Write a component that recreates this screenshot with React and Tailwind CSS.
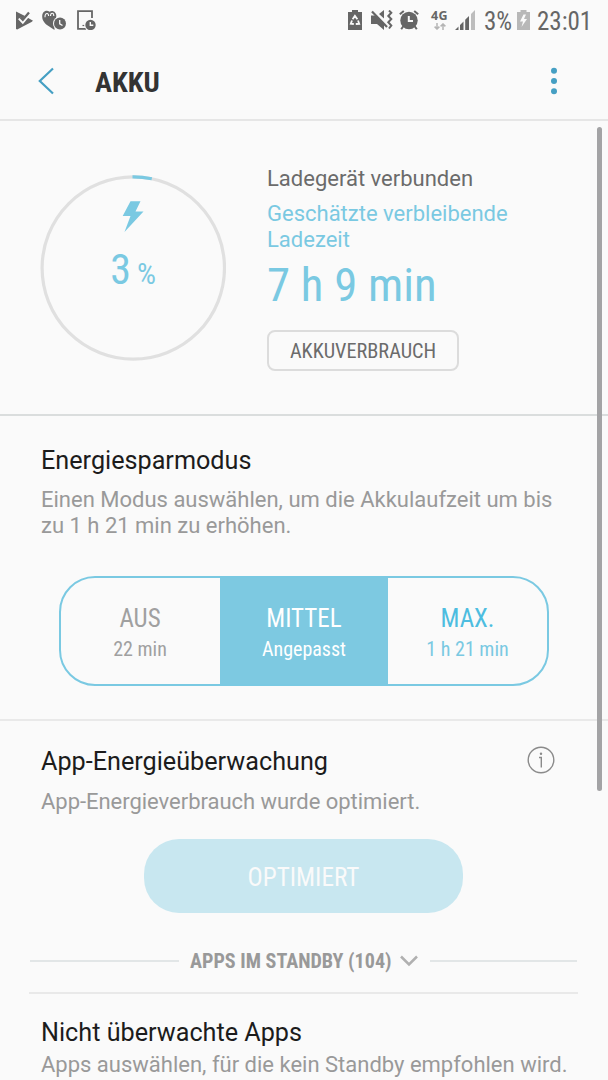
import { useState } from 'react'

const MODES = [
  { id: 'off', label: 'AUS',    info: '22 min' },
  { id: 'mid', label: 'MITTEL', info: 'Angepasst' },
  { id: 'max', label: 'MAX.',   info: '1 h 21 min' },
]

const condensed = 'font-stretch-condensed'

function StatusBar() {
  return (
    <div className="flex h-10 items-center pl-4 text-[#666]">
      {/* notifications */}
      <svg className="mt-0.5" width="18" height="20" viewBox="0 0 18 20" fill="currentColor">
        <path d="M0 .5 L9 5 L6.8 8 L4.8 6 L2.6 8 L6.8 12.3 L11.4 6.5 L17 9.8 L15.5 11 L1.2 18.6 L0 18 Z" />
        <path d="M2.8 7.6 L6.8 11.8 L13 4.500" fill="none" stroke="#fafafa" strokeWidth="1.800" />
        <path d="M4.300 6.300 L6.800 8.800 L13 1.600" fill="none" stroke="currentColor" strokeWidth="2.300" />
      </svg>
      <svg className="ml-2" width="25" height="20" viewBox="0 0 25 20" fill="currentColor">
        <path d="M7.5 1.8 C5 -.6 .3 1.2 .2 6 C0 11 3.5 14 6.5 16 L12.5 20 V14 L14 8 C15.500 3.500 11.500 -.6 7.500 1.800 Z" />
        <path d="M3 7.200 C3 4.500 4 3.500 5 3.500 C6.300 3.500 6.600 5 6.600 6 M8.500 6 C8.500 4.200 9.200 3.200 10.300 3.200 C11.500 3.200 11.800 4.500 11.800 6" fill="none" stroke="#fafafa" strokeWidth="1.100" />
        <circle cx="18" cy="13.500" r="7" fill="#fafafa" />
        <circle cx="18" cy="13.500" r="6" />
        <path d="M17.700 10 V13.800 L20.500 15.500" fill="none" stroke="#fafafa" strokeWidth="1.300" />
      </svg>
      <svg className="ml-2.5" width="20" height="20" viewBox="0 0 20 20" fill="currentColor">
        <path d="M15 8 V1.200 H1 V18.800 H9" fill="none" stroke="currentColor" strokeWidth="1.800" />
        <path d="M5.500 15.500 H7.500" stroke="currentColor" strokeWidth="1.200" />
        <circle cx="13.500" cy="15" r="6.200" fill="#fafafa" />
        <circle cx="13.500" cy="15" r="5.200" />
        <path d="M13.300 12 V15.200 H16.300" fill="none" stroke="#fafafa" strokeWidth="1.400" />
      </svg>

      {/* system state */}
      <svg className="ml-auto" width="14" height="20" viewBox="0 0 14 20" fill="currentColor">
        <path d="M4 0 H10 V2 H14 V20 H0 V2 H4 Z" />
        <path d="M4.600 9.300 L6.900 5.900 L9.400 9.300 M10 10.500 L11.200 13.800 L7.800 14 M5.800 14 L2.800 13.800 L4 10.500" fill="none" stroke="#fafafa" strokeWidth="1.800" />
      </svg>
      <svg className="ml-[9px]" width="22" height="20" viewBox="0 0 22 20" fill="currentColor">
        <path d="M0 5.500 H5 L13 13 V20 L6 14 H0 Z" />
        <path d="M8 4 L13 0 V8.500 Z" />
        <path d="M1 1.500 L16 17" stroke="currentColor" strokeWidth="2.200" />
        <path d="M18 .5 L20.300 2.800 L17.300 6 L20.300 9 L17.300 12.300 L20.300 15.500 L18 18.500" fill="none" stroke="currentColor" strokeWidth="2" />
      </svg>
      <svg className="ml-1.5" width="20" height="20" viewBox="0 0 20 20" fill="currentColor">
        <circle cx="10" cy="10.500" r="8.700" />
        <path d="M.8 4.200 L4.800 .9 M15.200 .9 L19.200 4.200 M4.500 16 L2.200 19.300 M15.500 16 L17.800 19.300" stroke="currentColor" strokeWidth="2" />
        <path d="M9.800 6 V11 H14" fill="none" stroke="#fafafa" strokeWidth="2" />
      </svg>
      <div className="ml-3 flex w-[17px] flex-col items-center">
        <span className="font-['Open_Sans',sans-serif] text-[12.500px] leading-[11px] font-bold tracking-[0.500px]">4G</span>
        <svg className="mt-[2px]" width="12" height="7" viewBox="0 0 12 7" fill="none" stroke="#b5b5b5" strokeWidth="1.500">
          <path d="M3 0 V6 M.6 3.600 L3 6 L5.400 3.600 M9 7 V1 M6.600 3.400 L9 1 L11.400 3.400" />
        </svg>
      </div>
      <svg className="ml-[7px]" width="20" height="20" viewBox="0 0 20 20" fill="currentColor">
        <path d="M0 20 L3.500 16.500 V20 Z M5 20 V15 L8.500 11.500 V20 Z M10.200 20 V9.800 L14 6 V20 Z" />
        <path d="M16 20 V4 L20 0 V20 Z" fill="#bdbdbd" />
      </svg>
      <span className={`ml-[9px] w-[27px] pt-[3px] text-[25px] leading-9 ${condensed}`}>3%</span>
      <svg className="ml-[6px]" width="13" height="20" viewBox="0 0 13 20">
        <path d="M3.500 0 H9.500 V2 H13 V20 H0 V2 H3.500 Z" fill="#b8b8b8" />
        <path d="M6.500 4.500 L3 11.500 H6 L4.500 17 L10 9 H7 L9 4.500 Z" fill="#fafafa" />
      </svg>
      <span className={`mr-4 ml-[7px] w-[55px] pt-[3px] text-[25px] leading-9 ${condensed}`}>23:01</span>
    </div>
  )
}

function Header() {
  return (
    <header className="flex h-[81px] items-center border-b-2 border-[#e6e6e6] pt-[3px] pr-[51px] pl-[38px] text-[#459fc3]">
      <svg width="16" height="28" viewBox="0 0 16 28" fill="none" stroke="currentColor" strokeWidth="2.200">
        <path d="M15 1.500 L1.800 14 L15 26.500" />
      </svg>
      <h1 className={`ml-[41px] pt-[3px] text-[28.5px] leading-9 font-bold text-[#333] ${condensed}`}>AKKU</h1>
      <svg className="ml-auto" width="6" height="28" viewBox="0 0 6 28" fill="currentColor">
        <circle cx="3" cy="3.700" r="3" />
        <circle cx="3" cy="14" r="3" />
        <circle cx="3" cy="24.300" r="3" />
      </svg>
    </header>
  )
}

function ChargeRing() {
  return (
    <div className="mt-[54px] grid h-[186px] w-[186px]">
      <svg className="col-start-1 row-start-1" width="186" height="186" viewBox="0 0 186 186" fill="none">
        <circle cx="93.300" cy="93" r="91.200" stroke="#e0e0e0" strokeWidth="3.200" />
        <circle cx="93.300" cy="93" r="91.200" stroke="#7ac9e2" strokeWidth="3.200" pathLength="100" strokeDasharray="3.400 96.600" transform="rotate(-90.500 93.300 93)" />
        <path d="M90.500 26.200 H100.500 L95.500 36.500 H103.500 L84.500 57 L90.500 41 H82.700 Z" fill="#7ac9e2" />
      </svg>
      <div className={`col-start-1 row-start-1 flex items-baseline justify-center pt-[71px] text-[#7ac9e2] ${condensed}`}>
        <span className="text-[42px] leading-[48px]">3</span>
        <span className="ml-[6px] text-[30px]">%</span>
      </div>
    </div>
  )
}

export default function App() {
  const [mode, setMode] = useState('mid')

  return (
    <div className="flex h-[1080px] w-[608px] flex-col overflow-hidden bg-[#fafafa] font-[Roboto,sans-serif]">
      <StatusBar />
      <Header />

      <main className="relative flex-1">
        <section className="flex h-[295px] gap-[41px] border-b-2 border-[#dadddd] pl-10">
          <ChargeRing />
          <div className="flex flex-col items-start pt-[45px] text-[22px] leading-[26px] text-[#7ac9e2]">
            <p className="text-[#6b6b6b]">Ladegerät verbunden</p>
            <p className="mt-[9px] w-[260px]">Geschätzte verbleibende Ladezeit</p>
            <p className={`mt-[8px] text-[46.8px] leading-[48px] ${condensed}`}>7 h 9 min</p>
            <button className={`mt-[21px] h-[41px] w-[192px] rounded-lg border-2 border-[#dcdcdc] pt-px text-[20.3px] text-[#6b6b6b] ${condensed}`}>
              AKKUVERBRAUCH
            </button>
          </div>
        </section>

        <section className="h-[305px] border-b-2 border-[#e9e9e9] pt-[30px] pl-[41px]">
          <h2 className="text-[25.200px] leading-[30px] text-[#1c1c1c]">Energiesparmodus</h2>
          <p className="mt-[11px] w-[530px] text-[22px] leading-[26px] text-[#999]">
            Einen Modus auswählen, um die Akkulaufzeit um bis zu 1 h 21 min zu erhöhen.
          </p>
          <div className="mt-[37px] ml-[18px] flex h-[110px] w-[490px] overflow-hidden rounded-[36px] border-2 border-[#7ac9e2]">
            {MODES.map(m => (
              <button
                key={m.id}
                onClick={() => setMode(m.id)}
                className={`flex flex-col items-center pt-[26px] ${condensed} ${
                  m.id === 'mid' ? 'w-[168px]' : 'w-[159px]'
                } ${
                  mode === m.id ? 'bg-[#7dc9e1] text-white'
                    : m.id === 'off' ? 'pr-px text-[#a0a0a0]' : 'text-[#7ac9e2]'
                }`}
              >
                <span className={`text-[25px] leading-[30px] ${m.id === 'max' && mode !== 'max' ? 'text-[#4dbde0]' : ''}`}>{m.label}</span>
                <span className="mt-[2px] text-[20px] leading-[26px]">{m.info}</span>
              </button>
            ))}
          </div>
        </section>

        <section className="pt-[26px] pl-[41px]">
          <div className="flex items-start">
            <h2 className="text-[25.200px] leading-[30px] text-[#1c1c1c]">App-Energieüberwachung</h2>
            <svg className="-mt-px mr-[53px] ml-auto" width="28" height="28" viewBox="0 0 28 28" fill="none" stroke="#8a8a8a" strokeWidth="1.400">
              <circle cx="14" cy="14" r="12.800" />
              <path d="M12 11.500 H14.300 V21.500" />
              <circle cx="14" cy="7.800" r="1.200" fill="#8a8a8a" stroke="none" />
            </svg>
          </div>
          <p className="mt-3 text-[22px] leading-[26px] tracking-[-0.030px] text-[#999]">App-Energieverbrauch wurde optimiert.</p>
          <button className={`mt-[24px] ml-[103px] block h-[74px] w-[319px] rounded-[35px] bg-[#c8e7f0] pt-[3px] text-[25.200px] text-[#fafafa] ${condensed}`}>
            OPTIMIERT
          </button>
        </section>

        <div className={`mt-[34px] ml-[30px] flex w-[547px] items-center text-[20px] leading-[26px] font-bold text-[#999] ${condensed}`}>
          <span className="h-0.5 w-[149px] bg-[#e2e6e7]" />
          <span className="ml-[11px] w-[202px] pt-px text-[20.100px] whitespace-nowrap">APPS IM STANDBY (104)</span>
          <svg className="ml-2" width="18" height="12" viewBox="0 0 18 12" fill="none" stroke="#b0b0b0" strokeWidth="2.500">
            <path d="M1 1.500 L9 9.500 L17 1.500" />
          </svg>
          <span className="ml-auto h-0.5 w-[147px] bg-[#e2e6e7]" />
        </div>

        <section className="mt-[18px] ml-[29px] w-[549px] border-t-2 border-[#e9e9e9] pt-[24px] pl-3">
          <h2 className="text-[25.200px] leading-[30px] text-[#1c1c1c]">Nicht überwachte Apps</h2>
          <p className="mt-[4px] text-[22px] leading-[26px] whitespace-nowrap text-[#999]">Apps auswählen, für die kein Standby empfohlen wird.</p>
        </section>

        {/* scroll thumb */}
        <div className="absolute top-[6px] right-[6px] h-[664px] w-[5px] rounded-full bg-[#a3a3a5]" />
      </main>
    </div>
  )
}
